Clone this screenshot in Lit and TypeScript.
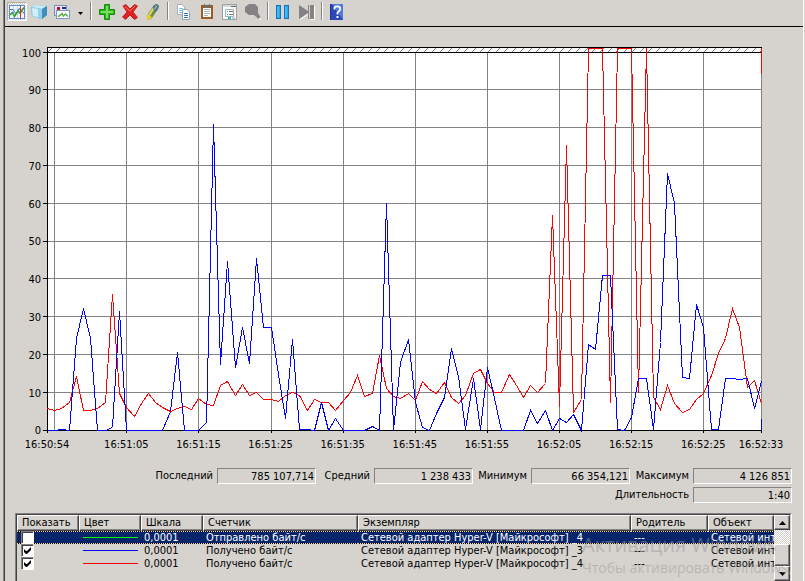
import { LitElement, html, svg, css } from "lit";
import { customElement } from "lit/decorators.js";
import { styleMap } from "lit/directives/style-map.js";

// One sample per second; each value is a height above the axis, where 378 is the 100 mark.
const SCALE_TOP = 378;
const SECONDS = 99;
const BLUE = [
  0, 0, 1, 0, 92, 122, 92, 0, 0, 3,
  119, 0, 0, 0, 0, 0, 0, 19, 78, 0,
  0, 0, 8, 306, 66, 169, 63, 103, 67, 172,
  103, 103, 56, 12, 91, 1, 1, 0, 28, 0,
  12, 0, 0, 0, 0, 4, 0, 227, 0, 68,
  91, 28, 3, 0, 17, 33, 82, 54, 1, 52,
  1, 63, 32, 0, 0, 0, 0, 20, 7, 20,
  0, 12, 8, 16, 0, 86, 81, 155, 155, 1,
  0, 13, 52, 52, 1, 88, 257, 227, 53, 52,
  126, 103, 1, 1, 52, 52, 51, 52, 22, 49,
];
const RED = [
  22, 20, 22, 28, 54, 20, 20, 22, 28, 136,
  37, 23, 14, 27, 37, 28, 23, 19, 22, 24,
  21, 32, 26, 25, 45, 49, 35, 46, 35, 38,
  31, 31, 29, 35, 38, 35, 20, 31, 28, 28,
  20, 30, 38, 55, 34, 37, 75, 42, 34, 32,
  37, 30, 49, 41, 37, 48, 33, 27, 35, 57,
  61, 47, 38, 38, 56, 45, 33, 45, 38, 47,
  215, 24, 285, 18, 31, 382, 382, 382, 28, 382,
  382, 382, 38, 382, 33, 21, 45, 27, 18, 21,
  31, 37, 55, 77, 92, 122, 103, 43, 50, 27,
];
const TIMES = [
  { at: 0, label: "16:50:54" },
  { at: 11, label: "16:51:05" },
  { at: 21, label: "16:51:15" },
  { at: 31, label: "16:51:25" },
  { at: 41, label: "16:51:35" },
  { at: 51, label: "16:51:45" },
  { at: 61, label: "16:51:55" },
  { at: 71, label: "16:52:05" },
  { at: 81, label: "16:52:15" },
  { at: 91, label: "16:52:25" },
  { at: 99, label: "16:52:33" },
];
const LEVELS = [100, 90, 80, 70, 60, 50, 40, 30, 20, 10, 0];

const px = (second: number) => Math.round(4 + (second * 714) / SECONDS) + 0.5;
const py = (height: number) => 383.5 - height;
const levelY = (level: number) => 5.5 + Math.floor(((100 - level) * SCALE_TOP) / 100);
const trace = (values: number[]) => values.map((v, i) => `${px(i)},${py(v)}`).join(" ");

@customElement("perf-chart")
export class PerfChart extends LitElement {
  static styles = css`
    :host {
      display: grid;
      grid-template-columns: 38px minmax(0, 1fr);
      padding: 20px 41px 0 0;
    }
    .levels {
      display: flex;
      flex-direction: column;
      justify-content: space-between;
      height: 378px;
      margin-top: 6px;
      padding-right: 2px;
    }
    .level {
      height: 0;
      display: flex;
      align-items: center;
      justify-content: flex-end;
    }
    .plot {
      display: block;
      width: 100%;
      height: 386px;
      shape-rendering: crispEdges;
    }
    .plot line,
    .plot polyline,
    .plot path {
      vector-effect: non-scaling-stroke;
      fill: none;
    }
    .grid { stroke: #848284; }
    .axis { stroke: #000; }
    .blue { stroke: #00f; }
    .red { stroke: #f00; }
    .times {
      grid-column: 2;
      display: grid;
      height: 22px;
      padding-left: 4px;
      align-items: center;
    }
    .time {
      width: 0;
      display: flex;
      justify-content: center;
      white-space: nowrap;
    }
  `;

  render() {
    const columns = TIMES.map((t, i) =>
      i < TIMES.length - 1 ? `minmax(0, ${TIMES[i + 1].at - t.at}fr)` : "1px"
    ).join(" ");
    return html`
      <div class="levels">${LEVELS.map((l) => html`<div class="level">${l}</div>`)}</div>
      <svg class="plot" viewBox="0 0 719 386" preserveAspectRatio="none" aria-hidden="true">
        <defs>
          <pattern id="hatch" width="8" height="4" patternUnits="userSpaceOnUse" x="4" y="1">
            <rect width="8" height="4" fill="#fff" />
            <path d="M1.5 4v-1M2.5 3v-1M3.5 2v-1M4.5 1v-1" stroke="#848284" />
          </pattern>
        </defs>
        <rect x="4" y="0" width="715" height="384" fill="#fff" />
        <rect x="4" y="1" width="714" height="4" fill="url(#hatch)" />
        ${LEVELS.slice(1, -1).map((l) => svg`<line class="grid" x1="4" x2="719" y1=${levelY(l)} y2=${levelY(l)} />`)}
        ${[1, ...TIMES.slice(1).map((t) => t.at)].map(
          (t) => svg`<line class="grid" x1=${px(t)} x2=${px(t)} y1="6" y2="383" />`
        )}
        ${LEVELS.map((l) => svg`<line class="axis" x1="0" x2="4" y1=${levelY(l)} y2=${levelY(l)} />`)}
        ${TIMES.map((t) => svg`<line class="axis" x1=${px(t.at)} x2=${px(t.at)} y1="383" y2="386" />`)}
        <path class="axis" d="M4 .5H719M4 5.5H719M4.5 0V384M4 383.5H719" />
        <polyline class="red" points=${trace(RED)} />
        <line class="red" x1="718.5" x2="718.5" y1="1" y2="27" />
        <polyline class="blue" points=${trace(BLUE)} />
        <line class="blue" x1="718.5" x2="718.5" y1="372" y2="383" />
      </svg>
      <div class="times" style=${styleMap({ gridTemplateColumns: columns })}>
        ${TIMES.map((t) => html`<span class="time">${t.label}</span>`)}
      </div>
    `;
  }
}

const ICONS = {
  chart: svg`
    <rect x=".5" y="1.5" width="15" height="13" fill="#eef8fa" stroke="#5a8ad0"/>
    <path d="M4.500 2v12M8.500 2v12M1 5.500h14M1 9.500h14" stroke="#c4dcf0" shape-rendering="crispEdges"/>
    <path d="M1 5.500H4L7 10 10 4.500 15 9" fill="none" stroke="#4070c8"/>
    <path d="M1 11 3.500 8.500 5.500 12.500 9 7 11 9 15 3.500" fill="none" stroke="#3c9c30" stroke-width="1.600"/>
    <path d="M11.500 2v12" stroke="#e03020" shape-rendering="crispEdges"/>`,
  cube: svg`
    <path d="M0 3 5 1 16 2V11L11 15 1 12Z" fill="#5fb4d8"/>
    <path d="M0 3 5 1 16 2 11 5Z" fill="#cdebf5"/>
    <path d="M0 3 11 5V15L1 12Z" fill="#93d0e8"/>
    <path d="M1 4 7 5V13L2 12Z" fill="#d4eef7"/>
    <path d="M11 5 16 2V11L11 15Z" fill="#3a90bc"/>`,
  gallery: svg`
    <rect x=".5" y="1.500" width="12" height="10" fill="#dfe6f4" stroke="#8090b8"/>
    <rect x="3" y="3" width="3" height="3" fill="#c01020"/><rect x="8" y="3" width="4" height="2" fill="#2030a0"/>
    <rect x="2.500" y="6.500" width="13" height="8" fill="#f8fcf8" stroke="#8098c8"/>
    <path d="M4 12.500 6 11.500 8 9.500 9.500 12 11.500 10 14 12.500" fill="none" stroke="#60b050" stroke-width="1.500"/>`,
  plus: svg`
    <path d="M5.500 .5H10.500V5.500H15.500V10.500H10.500V15.500H5.500V10.500H.5V5.500H5.500Z" fill="#2fb520" stroke="#138a10"/>
    <path d="M7 2H9V7H14V9H9V14H7V9H2V7H7Z" fill="#7be05c"/>`,
  cross: svg`
    <path d="M1 2 4 .5 8 5 12.500 .5 15.500 2 11 8 15.500 13.500 12.500 15.500 8 11 3.500 15.500 .5 13 5 8Z" fill="#e02020" stroke="#b81414" stroke-width=".8"/>
    <path d="M3 2.500 8 7 13 2" fill="none" stroke="#f87868"/>`,
  pen: svg`
    <path d="M9 1 12 0 14 2 13 5 7 14 3 16 2 14 3 10Z" fill="#728a50"/>
    <path d="M9 1 12 0 14 2 13 5 11 8 7.500 4Z" fill="#54788c"/>
    <path d="M7.500 4 9 5.500 5 12 3.500 10.500Z" fill="#e0d860"/>
    <path d="M3 10 7 13.500 3 16 2 14Z" fill="#f0d418"/>
    <path d="M10.500 1.500 11.500 2.500 9.500 5" stroke="#c4d8e0" fill="none"/>`,
  copy: svg`
    <path d="M1.500 .5H6L8.500 3V10.500H1.500Z" fill="#fff" stroke="#a8b0b8"/>
    <path d="M3 4.500h4M3 6.500h4M3 8.500h3" stroke="#7cc0e0"/>
    <path d="M6.500 5.500H11L13.500 8V15.500H6.500Z" fill="#fff" stroke="#90a4b8"/>
    <path d="M8 9.500h4M8 11.500h4M8 13.500h4" stroke="#3474b4"/>`,
  paste: svg`
    <rect x="2" y="1" width="12" height="14" fill="#a05a20"/>
    <rect x="4" y="4" width="8" height="9" fill="#f8fcff"/>
    <rect x="5" y="0" width="6" height="4" fill="#68706c"/><rect x="6" y="0" width="4" height="1" fill="#c8ccd0"/>
    <path d="M5 5.500h6M5 7.500h6M5 9.500h6M5 11.500h4" stroke="#a8b4b8"/>`,
  props: svg`
    <rect x=".5" y=".5" width="14" height="15" fill="#fafcfa" stroke="#a0a0a0"/>
    <rect x="1" y="1" width="13" height="2" fill="#d4d8dc"/><path d="M9 2.500h5" stroke="#606870"/>
    <path d="M3.500 13V5.500H11.500V12.500H3.500" fill="none" stroke="#a8b0b0"/>
    <path d="M5 7.500h1M5 10.500h1" stroke="#30a0c0"/><path d="M7 7.500h4M7 10.500h4" stroke="#707880"/>
    <rect x="6" y="13" width="3" height="2" fill="#28c0d8"/><rect x="10" y="13" width="3" height="2" fill="#c8ccd0"/>`,
  lens: svg`
    <path d="M12 13 16 15.500V14" fill="none" stroke="#fff"/>
    <path d="M4 0H10L13 3V9L15.500 13 13.500 15 9 11H4L0 8V3Z" fill="#848284"/>`,
  pause: svg`
    <rect x=".5" y="1.500" width="4" height="13" fill="#28a8ec" stroke="#1474b8"/>
    <rect x="8.500" y="1.500" width="4" height="13" fill="#28a8ec" stroke="#1474b8"/>
    <path d="M2 3v10M10 3v10" stroke="#58ccfc"/>`,
  step: svg`
    <path d="M1 15.500 10 9.500M12 15.500H15.500V2" fill="none" stroke="#fff"/>
    <path d="M0 1 9 7V1H10V15H9V9L0 15ZM11 1H15V15H11Z" fill="#848284"/>`,
  help: svg`
    <rect x="0" y="0" width="13" height="16" fill="#2c48b4"/>
    <path d="M2 0H13V16Z" fill="#5478dc"/><path d="M.5 0V16" stroke="#1c3494"/>
    <path d="M4.500 5.500V3.500L6 2.500H8.500L10 3.500V6L7.500 8.500V10.500" fill="none" stroke="#fff" stroke-width="1.800"/>
    <rect x="6.500" y="12" width="2" height="2" fill="#fff"/>`,
};

@customElement("tool-bar")
export class ToolBar extends LitElement {
  static styles = css`
    :host {
      display: flex;
      align-items: flex-start;
      height: 24px;
      padding: 2px 2px 0;
      border-bottom: 1px solid #000;
    }
    .tool {
      appearance: none;
      border: 0;
      padding: 0 0 0 2px;
      margin: 0 2px;
      width: 19px;
      height: 19px;
      background: none;
      display: block;
    }
    .pressed {
      box-sizing: border-box;
      margin: 0;
      width: 20px;
      border: 1px solid #fff;
      border-top-color: #b0aca8;
      border-left-color: #b0aca8;
      padding-left: 1px;
      background: repeating-conic-gradient(#fff 0 25%, #d6d3ce 0 50%) 0 0 / 2px 2px;
    }
    .drop { width: 12px; margin: 0 0 0 2px; padding-left: 1px; }
    .icon { display: block; }
    .sep {
      width: 1px;
      height: 18px;
      margin: 0 3px;
      background: #848284;
      border-right: 1px solid #fff;
    }
    .group { display: flex; }
  `;

  private tool(name: keyof typeof ICONS, label: string, cls = "") {
    return html`<button class="tool ${cls}" type="button" aria-label=${label}>
      <svg class="icon" width="16" height="16" viewBox="0 0 16 16">${ICONS[name]}</svg>
    </button>`;
  }

  render() {
    return html`
      <div class="group">
        ${this.tool("chart", "Просмотр текущей активности", "pressed")}
        ${this.tool("cube", "Просмотр данных журнала")}
        ${this.tool("gallery", "Изменить тип диаграммы")}
        <button class="tool drop" type="button" aria-label="Тип диаграммы">
          <svg class="icon" width="9" height="16" viewBox="0 0 9 16"><path d="M2 8H7L4.500 11Z" /></svg>
        </button>
      </div>
      <span class="sep"></span>
      <div class="group">
        ${this.tool("plus", "Добавить")} ${this.tool("cross", "Удалить")} ${this.tool("pen", "Выделить")}
      </div>
      <span class="sep"></span>
      <div class="group">
        ${this.tool("copy", "Копировать свойства")} ${this.tool("paste", "Вставить список счетчиков")}
        ${this.tool("props", "Свойства")} ${this.tool("lens", "Масштаб")}
      </div>
      <span class="sep"></span>
      <div class="group">
        ${this.tool("pause", "Остановить отображение")} ${this.tool("step", "Обновить данные")}
      </div>
      <span class="sep"></span>
      <div class="group">${this.tool("help", "Справка")}</div>
    `;
  }
}

@customElement("perf-stats")
export class PerfStats extends LitElement {
  static styles = css`
    :host {
      display: grid;
      grid-template-columns: 1fr 99px 58px 99px 58px 99px 63px 99px;
      gap: 3px 0;
      justify-content: end;
      padding: 13px 11px 0 0;
    }
    .name {
      text-align: right;
      padding-right: 4px;
      line-height: 16px;
      white-space: nowrap;
    }
    .wide { grid-column: 1 / 8; }
    .value {
      box-sizing: border-box;
      height: 16px;
      line-height: 15px;
      padding-right: 1px;
      text-align: right;
      border: 1px solid #848284;
      border-right-color: #fff;
      border-bottom-color: #fff;
    }
  `;

  render() {
    return html`
      <span class="name">Последний</span><span class="value">785 107,714</span>
      <span class="name">Средний</span><span class="value">1 238 433</span>
      <span class="name">Минимум</span><span class="value">66 354,121</span>
      <span class="name">Максимум</span><span class="value">4 126 851</span>
      <span class="name wide">Длительность</span><span class="value">1:40</span>
    `;
  }
}

const ROWS = [
  { shown: false, color: "#00ff00", counter: "Отправлено байт/с", instance: "Сетевой адаптер Hyper-V [Майкрософт] _4" },
  { shown: true, color: "#0000ff", counter: "Получено байт/с", instance: "Сетевой адаптер Hyper-V [Майкрософт] _3" },
  { shown: true, color: "#ff0000", counter: "Получено байт/с", instance: "Сетевой адаптер Hyper-V [Майкрософт] _4" },
];

@customElement("counter-list")
export class CounterList extends LitElement {
  static styles = css`
    :host {
      display: block;
      margin: 10px 11px 0 10px;
      border: 1px solid #848284;
      border-right-color: #fff;
      border-bottom: 0;
    }
    .inner {
      display: flex;
      height: 66px;
      border: 1px solid #424142;
      border-right-color: #d6d3ce;
      border-bottom: 0;
    }
    .scroll-area { flex: 1; min-width: 0; overflow: hidden; }
    .table {
      width: 100%;
      table-layout: fixed;
      border-collapse: separate;
      border-spacing: 0;
    }
    .c-show, .c-color, .c-scale { width: 62px; }
    .c-counter { width: 155px; }
    .c-parent { width: 77px; }
    .c-object { width: 66px; }
    th {
      box-sizing: border-box;
      height: 16px;
      padding: 0 0 0 4px;
      font-weight: normal;
      text-align: left;
      line-height: 14px;
      white-space: nowrap;
      overflow: hidden;
      border-top: 1px solid #fff;
      border-left: 1px solid #fff;
      border-right: 1px solid #424142;
      border-bottom: 1px solid #424142;
      box-shadow: inset -1px -1px #848284;
    }
    td {
      height: 13px;
      padding: 0 0 0 3px;
      line-height: 13px;
      white-space: nowrap;
      overflow: hidden;
    }
    .selected td {
      background:
        repeating-linear-gradient(90deg, #f7db94 0 1px, #000 1px 2px) top / 100% 1px no-repeat,
        repeating-linear-gradient(90deg, #f7db94 0 1px, #000 1px 2px) bottom / 100% 1px no-repeat,
        #08246b;
      color: #fff;
    }
    .swatch { display: block; height: 1px; margin: 0 3px 0 1px; }
    .box {
      appearance: none;
      display: block;
      position: relative;
      box-sizing: border-box;
      width: 13px;
      height: 13px;
      margin: 0 0 0 1px;
      background: #fff;
      border: 1px solid #848284;
      border-right-color: #fff;
      border-bottom-color: #fff;
      box-shadow: inset 1px 1px #424142;
    }
    .box:checked::before {
      content: "";
      position: absolute;
      left: 2px;
      top: 2px;
      width: 7px;
      height: 7px;
      background: #000;
      clip-path: polygon(0 2px, 2px 4px, 3px 4px, 7px 0, 7px 3px, 3px 7px, 2px 7px, 0 5px);
    }
    .bar {
      width: 16px;
      display: flex;
      flex-direction: column;
      background: repeating-conic-gradient(#fff 0 25%, #d6d3ce 0 50%) 0 0 / 2px 2px;
    }
    .arrow, .thumb {
      box-sizing: border-box;
      width: 16px;
      padding: 0;
      background: #d6d3ce;
      border: 1px solid #fff;
      border-right-color: #424142;
      border-bottom-color: #424142;
      box-shadow: inset -1px -1px #848284;
    }
    .arrow { height: 15px; display: grid; place-items: center; }
    .thumb { height: 22px; margin-top: 14px; }
    .tri { display: block; }
  `;

  render() {
    return html`
      <div class="inner">
        <div class="scroll-area">
          <table class="table">
            <colgroup>
              <col class="c-show" /><col class="c-color" /><col class="c-scale" /><col class="c-counter" />
              <col /><col class="c-parent" /><col class="c-object" />
            </colgroup>
            <thead>
              <tr>
                <th>Показать</th><th>Цвет</th><th>Шкала</th><th>Счетчик</th>
                <th>Экземпляр</th><th>Родитель</th><th>Объект</th>
              </tr>
            </thead>
            <tbody>
              ${ROWS.map(
                (r, i) => html`<tr class=${i === 0 ? "selected" : ""}>
                  <td><input class="box" type="checkbox" aria-label="Показать ${r.counter}" .checked=${r.shown} /></td>
                  <td><span class="swatch" style=${styleMap({ background: r.color })}></span></td>
                  <td>0,0001</td>
                  <td>${r.counter}</td>
                  <td>${r.instance}</td>
                  <td>---</td>
                  <td>Сетевой инт</td>
                </tr>`
              )}
            </tbody>
          </table>
        </div>
        <div class="bar">
          <button class="arrow" type="button" aria-label="Вверх">
            <svg class="tri" width="7" height="4" viewBox="0 0 7 4"><path d="M0 4 3.500 0 7 4Z" /></svg>
          </button>
          <div class="thumb"></div>
          <button class="arrow" type="button" aria-label="Вниз">
            <svg class="tri" width="7" height="4" viewBox="0 0 7 4"><path d="M0 0 3.500 4 7 0Z" /></svg>
          </button>
        </div>
      </div>
    `;
  }
}

@customElement("app-root")
export class AppRoot extends LitElement {
  static styles = css`
    :host {
      display: block;
      position: relative;
      overflow: hidden;
      padding: 0 1px 0 3px;
      background: #d6d3ce;
      color: #000;
      font: 11px "DejaVu Sans Condensed", "DejaVu Sans", sans-serif;
    }
    .panel {
      border-left: 1px solid #848284;
      border-right: 1px solid #fff;
      box-shadow: inset 1px 0 #424142;
      padding-left: 1px;
    }
    .notice {
      position: absolute;
      right: 0;
      bottom: 2px;
      width: 223px;
      color: rgba(150, 150, 150, 0.5);
      font-family: "Open Sans", "Noto Sans", sans-serif;
      white-space: nowrap;
      pointer-events: none;
    }
    .title { font-size: 20px; line-height: 24px; }
    .hint { font-size: 14px; line-height: 22px; }
  `;

  render() {
    return html`
      <div class="panel">
        <tool-bar></tool-bar>
        <perf-chart></perf-chart>
        <perf-stats></perf-stats>
        <counter-list></counter-list>
      </div>
      <div class="notice">
        <div class="title">Активация Windows</div>
        <div class="hint">Чтобы активировать Windows,</div>
      </div>
    `;
  }
}
